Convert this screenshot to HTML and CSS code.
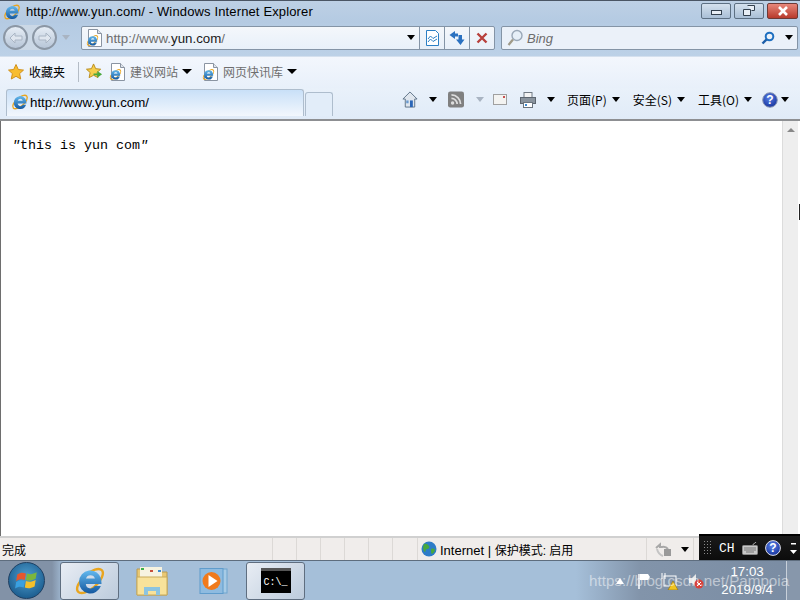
FILE: index.html
```html
<!DOCTYPE html>
<html>
<head>
    <title>http://www.yun.com/ - Windows Internet Explorer</title>
    <link rel="stylesheet" href="styles.css">
</head>
<body>
<svg class="defs">
    <defs>
        <linearGradient id="ieblue" x1="0" y1="0" x2="0" y2="1">
            <stop offset="0" stop-color="#62b8ee"/>
            <stop offset="1" stop-color="#14589f"/>
        </linearGradient>
        <radialGradient id="helpblue" cx=".45" cy=".35" r=".7">
            <stop offset="0" stop-color="#5a80e6"/>
            <stop offset="1" stop-color="#12309a"/>
        </radialGradient>
        <symbol id="ie" viewBox="0 0 20 20">
            <ellipse cx="10" cy="10" rx="10" ry="4.600" transform="rotate(-42 10 10)" fill="none" stroke="#e9a51e" stroke-width="1.500"/>
            <path d="M3.200 10.500a7 7 0 0 1 13.800-1.700l.2 3H7.400a3 3 0 0 0 5.600 1.300h3.800A7 7 0 0 1 3.200 10.500zm4.300-2h5.600a2.900 2.900 0 0 0-5.600 0z" fill="url(#ieblue)"/>
        </symbol>
        <symbol id="iedoc" viewBox="0 0 16 18">
            <path d="M2.500 .5h9l4 4v13h-13z" fill="#fff" stroke="#8a94a2"/>
            <path d="M11.500 .5v4h4" fill="#dfe5ec" stroke="#8a94a2"/>
            <use href="#ie" x="0" y="5" width="13" height="13"/>
        </symbol>
    </defs>
</svg>

<div class="window">
    <div class="titlebar">
        <svg class="ico16"><use href="#ie"/></svg>
        <span class="title">http://www.yun.com/ - Windows Internet Explorer</span>
        <div class="winbtns">
            <div class="winbtn"><span class="min-mark"></span></div>
            <div class="winbtn">
                <svg width="12" height="12" viewBox="0 0 12 12"><path d="M4.500 .5h7v5h-3M.5 4.500h7v6h-7z" fill="#e8eef5" stroke="#33404e"/></svg>
            </div>
            <div class="winbtn close">
                <svg width="14" height="10" viewBox="0 0 14 10"><path d="M3 1l8 8M11 1l-8 8" stroke="#fff" stroke-width="2.600"/></svg>
            </div>
        </div>
    </div>

    <div class="navbar">
        <div class="backfwd">
            <div class="round"><svg width="14" height="12" viewBox="0 0 14 12"><path d="M1 6l5-5v3h7v4H6v3z" fill="#dfe6ef" stroke="#a9b5c4"/></svg></div>
            <div class="round"><svg width="14" height="12" viewBox="0 0 14 12"><path d="M13 6L8 1v3H1v4h7v3z" fill="#dfe6ef" stroke="#a9b5c4"/></svg></div>
        </div>
        <span class="caret pale"></span>
        <div class="address">
            <svg class="ico-doc"><use href="#iedoc"/></svg>
            <span class="url">http://www.<b>yun.com</b>/</span>
            <span class="caret addr-caret"></span>
            <div class="addr-btn">
                <svg width="15" height="16" viewBox="0 0 15 16"><path d="M1.500 .5h9l3 3v12h-12z" fill="#fff" stroke="#2b7fc4"/><path d="M3 9l2.500-3 2.500 2.500L12 6M3 12l2.500-3 2.500 2.500 4-2.500" fill="none" stroke="#2b7fc4"/></svg>
            </div>
            <div class="addr-btn">
                <svg width="16" height="16" viewBox="0 0 16 16"><path d="M6 1L.5 5 6 9V6.500h3v-3H6z" fill="#2b71c0"/><path d="M11.500 15l4-5.500H13V5H9.500v4.500H7z" fill="#2b71c0"/></svg>
            </div>
            <div class="addr-btn">
                <svg width="12" height="12" viewBox="0 0 12 12"><path d="M1.500 1.500l9 9M10.500 1.500l-9 9" stroke="#b8403c" stroke-width="2.400"/></svg>
            </div>
        </div>
        <div class="search">
            <svg width="16" height="18" viewBox="0 0 16 18"><circle cx="10" cy="6.500" r="5" fill="#e6eff8" stroke="#9aa8b8" stroke-width="1.400"/><path d="M6 10.500L1.500 16" stroke="#a09a88" stroke-width="2.200"/></svg>
            <span class="bing">Bing</span>
            <svg class="go" width="14" height="14" viewBox="0 0 14 14"><circle cx="8.500" cy="5.500" r="3.800" fill="none" stroke="#1d6fc0" stroke-width="2"/><path d="M5.500 8.500L1.500 12.500" stroke="#1d5fa8" stroke-width="2.400"/></svg>
            <span class="caret search-caret"></span>
        </div>
    </div>

    <div class="favbar">
        <svg class="ico-star" viewBox="0 0 16 16"><path d="M8 .5l2.300 5 5.200.6-3.900 3.500 1.100 5.400L8 12.300 3.300 15l1.100-5.400L.5 6.100l5.200-.6z" fill="#f8bd30" stroke="#d0901c"/></svg>
        <span class="fav-label">收藏夹</span>
        <span class="sep"></span>
        <svg class="ico-addfav" viewBox="0 0 18 18"><path d="M8 1l2.200 5 5.300.6-3.900 3.500 1.100 5.400L8 13l-4.700 2.500 1.100-5.400L.5 6.600l5.300-.6z" fill="#f6cf4c" stroke="#b88a1a"/><path d="M8 11h4V8.500l5 3.500-5 3.500V13H8z" fill="#4aa83c"/></svg>
        <svg class="ico-doc"><use href="#iedoc"/></svg>
        <span class="fav-link">建议网站</span>
        <span class="caret"></span>
        <svg class="ico-doc second"><use href="#iedoc"/></svg>
        <span class="fav-link">网页快讯库</span>
        <span class="caret"></span>
    </div>

    <div class="tabbar">
        <div class="tab">
            <svg class="ico16"><use href="#ie"/></svg>
            <span>http://www.yun.com/</span>
        </div>
        <div class="newtab"></div>
        <div class="cmds">
            <svg class="cmd-ico" viewBox="0 0 16 18"><path d="M8 1L.5 8.500 3 8.500V17h10V8.500h2.500z" fill="#dfe6ee" stroke="#5d7286"/><rect x="8" y="10" width="3" height="7" fill="#2a66b8"/><rect x="4" y="10" width="2.500" height="3" fill="#6a9ad0"/></svg>
            <span class="caret m-home"></span>
            <svg class="cmd-ico" viewBox="0 0 14 14"><rect width="14" height="14" rx="2" fill="#808080"/><circle cx="4" cy="10" r="1.500" fill="#ddd"/><path d="M3 6a5 5 0 0 1 5 5M3 3a8 8 0 0 1 8 8" fill="none" stroke="#ddd" stroke-width="1.500"/></svg>
            <span class="caret pale m-rss"></span>
            <svg class="mail" width="14" height="11" viewBox="0 0 14 11"><rect x=".5" y=".5" width="13" height="10" fill="#f3f3f1" stroke="#a0a0a0"/><rect x="10" y="2" width="2" height="2" fill="#c95050"/></svg>
            <svg class="printer" width="16" height="16" viewBox="0 0 16 16"><rect x="4" y=".5" width="8" height="5" fill="#f4f4f4" stroke="#707a84"/><rect x=".5" y="5.500" width="15" height="6" fill="#8a949e" stroke="#5d6670"/><rect x="3.500" y="10.500" width="9" height="5" fill="#fff" stroke="#6b747d"/><rect x="5" y="12" width="2" height="2" fill="#3c8ad0"/></svg>
            <span class="caret m-print"></span>
            <span class="cmd">页面(P)</span><span class="caret"></span>
            <span class="cmd">安全(S)</span><span class="caret"></span>
            <span class="cmd">工具(O)</span><span class="caret"></span>
            <svg class="help" width="16" height="16" viewBox="0 0 16 16"><circle cx="8" cy="8" r="7.300" fill="url(#helpblue)" stroke="#8c98b4"/><text x="8" y="12" class="help-q">?</text></svg>
            <span class="caret m-help"></span>
        </div>
    </div>

    <div class="page">
        <pre class="content"><i>"</i>this is yun com<i>"</i></pre>
        <div class="scrollbar"><span class="scroll-up"></span></div>
        <span class="edge-mark"></span>
    </div>

    <div class="statusbar">
        <span class="st-done">完成</span>
        <span class="st-cell"></span>
        <span class="st-cell"></span>
        <span class="st-cell"></span>
        <span class="st-cell"></span>
        <span class="st-cell"></span>
        <span class="st-cell"></span>
        <span class="st-zone">
            <svg width="16" height="16" viewBox="0 0 16 16"><circle cx="8" cy="8" r="7.500" fill="#2d7cc8"/><path d="M3 3c3-1 4 1 5 2s0 3-2 3-1 3-2 3S1 7 3 3zM10 8c2-1 4 0 4 1s-2 4-3 4-1-4-1-5z" fill="#48a83e"/></svg>
            <span>Internet | <span class="zone-cjk">保护模式: 启用</span></span>
        </span>
        <span class="st-lock">
            <svg width="18" height="16" viewBox="0 0 18 16"><path d="M1 7l4-3.500v2.500h2a6 6 0 0 1 6 2" fill="none" stroke="#a8a8a8" stroke-width="2"/><path d="M2 8c1 4 3 6 6 7" fill="none" stroke="#c4c4c4" stroke-width="2"/><rect x="9" y="8" width="7" height="7" fill="#9a9a9a"/></svg>
            <span class="caret"></span>
        </span>
        <span class="st-rest"></span>
    </div>

    <div class="taskbar">
        <div class="orb">
            <svg width="26" height="26" viewBox="0 0 24 24"><path d="M3 6c3-2 5-2 8-1l-1 6c-3-1-5-1-8 1z" fill="#e4572e"/><path d="M12 5c3 1 5 1 9-1l-1 6c-4 2-6 2-9 1z" fill="#7cb63c"/><path d="M2 13c3-2 5-2 8-1l-1 6c-3-1-5-1-8 1z" fill="#3aa0e0"/><path d="M11 12c3 1 5 1 9-1l-1 6c-4 2-6 2-9 1z" fill="#f4c02c"/></svg>
        </div>
        <div class="task active"><svg class="task-ico" viewBox="0 0 20 20"><use href="#ie"/></svg></div>
        <div class="task">
            <svg width="32" height="30" viewBox="0 0 32 30"><path d="M1 3h12l2 3h16v23H1z" fill="#e9c874" stroke="#b89a50"/><rect x="4" y="1" width="22" height="10" fill="#f7f3e0"/><rect x="5" y="2" width="3" height="2" fill="#3eb04a"/><rect x="14" y="4" width="3" height="2" fill="#c8503c"/><rect x="22" y="4" width="3" height="2" fill="#3c8ad0"/><path d="M1 11h30v18H1z" fill="#f8e29a" stroke="#c8aa5a"/><path d="M8 29v-8h16v8h-4v-4h-8v4z" fill="#8cc4e0"/></svg>
        </div>
        <div class="task">
            <svg width="29" height="26" viewBox="0 0 29 26"><rect x="6" y="1" width="22" height="24" fill="#a7cbe6" stroke="#6fa5cf"/><rect x="1" y=".5" width="23" height="25" fill="#8ebbe0" stroke="#5f9ccc"/><circle cx="12.500" cy="13" r="9" fill="#f07a1c"/><path d="M9.500 7l9 6-9 6z" fill="#fff"/></svg>
        </div>
        <div class="task active">
            <div class="cmdicon"><span>C:\_</span></div>
        </div>
        <div class="tray">
            <svg class="tray-up" width="8" height="6" viewBox="0 0 8 6"><path d="M4 0l4 6H0z" fill="#fff"/></svg>
            <svg class="tray-flag" width="14" height="16" viewBox="0 0 14 16"><path d="M2 1v15" stroke="#fff" stroke-width="1.500"/><path d="M3 1h8l2 3-2 3H3z" fill="#fff"/></svg>
            <svg class="tray-net" width="18" height="18" viewBox="0 0 18 18"><rect x="3" y="4" width="12" height="10" fill="none" stroke="#fff"/><path d="M1 1v6M4 1v6" stroke="#fff"/><path d="M12 9l5 9H7z" fill="#f0c420" stroke="#8a6c10" stroke-width=".6"/></svg>
            <svg class="tray-vol" width="16" height="18" viewBox="0 0 16 18"><path d="M1 6h3l4-4v13l-4-4H1z" fill="#e8e8e8"/><circle cx="11" cy="12" r="4.500" fill="#d8413a"/><path d="M9 10l4 4M13 10l-4 4" stroke="#fff"/></svg>
            <div class="clock"><span>17:03</span><span>2019/9/4</span></div>
        </div>
        <div class="showdesk"></div>
    </div>
</div>

<div class="langbar">
    <span class="grip"></span>
    <span class="lang">CH</span>
    <svg width="16" height="14" viewBox="0 0 16 14"><path d="M11 4c0-2 2-1 3-3" fill="none" stroke="#aaa"/><rect x=".5" y="4.500" width="15" height="9" rx="1" fill="#c8c8c8" stroke="#8a8a8a"/><path d="M2 7h12M2 9h12M4 11h8" stroke="#777"/></svg>
    <svg width="16" height="16" viewBox="0 0 16 16"><circle cx="8" cy="8" r="7.400" fill="url(#helpblue)" stroke="#e0e0e8"/><text x="8" y="12" class="help-q">?</text></svg>
    <svg class="lang-arrows" width="7" height="12" viewBox="0 0 7 12"><path d="M1 1h5v1.500H1zM0 8h7l-3.500 4z" fill="#fff"/></svg>
</div>

<div class="watermark">https://blog.csdn.net/Pampoia</div>
</body>
</html>
```

FILE: styles.css
```css
* {
    box-sizing: border-box;
}

html, body {
    margin: 0;
    height: 100%;
    overflow: hidden;
}

body {
    position: relative;
    font-family: "Noto Sans CJK SC", "Liberation Sans", sans-serif;
    font-size: 12px;
    color: #000;
}

.defs {
    position: absolute;
    width: 0;
    height: 0;
}

.window {
    display: flex;
    flex-direction: column;
    width: 800px;
    height: 600px;
}

/* small black arrow used all over the toolbars */
.caret {
    display: inline-block;
    width: 0;
    height: 0;
    flex: none;
    border-left: 5px solid transparent;
    border-right: 5px solid transparent;
    border-top: 5px solid #000;
}

.caret.pale {
    border-top-color: #a9b4c2;
}

.ico16 {
    width: 18px;
    height: 18px;
    flex: none;
}

.ico-doc {
    width: 16px;
    height: 18px;
    flex: none;
}

/* title bar */
.titlebar {
    display: flex;
    align-items: center;
    height: 23px;
    padding: 0 0 1px 3px;
    border-top: 1px solid #4a5564;
    background: linear-gradient(#bdd0e5, #b4cae2);
}

.title {
    margin-left: 5px;
    font-family: "Liberation Sans", sans-serif;
    font-size: 13px;
    letter-spacing: .14px;
}

.winbtns {
    display: flex;
    gap: 3px;
    margin-left: auto;
    margin-right: 2px;
    align-self: flex-start;
    margin-top: 2px;
}

.winbtn {
    display: flex;
    align-items: center;
    justify-content: center;
    width: 30px;
    height: 16px;
    border: 1px solid #5d7083;
    border-radius: 2px;
    background: linear-gradient(#d5e1ee, #a9bfd6);
}

.winbtn.close {
    width: 31px;
    background: linear-gradient(#e8877a, #b83a2c);
    border-color: #6e3a36;
}

.min-mark {
    width: 11px;
    height: 5px;
    border: 1px solid #33404e;
    background: #e8eef5;
    margin-top: 2px;
}

/* address row */
.navbar {
    display: flex;
    align-items: center;
    height: 33px;
    padding: 0 2px 4px 3px;
    background: linear-gradient(#b5cbe3, #bcd1e7);
}

.backfwd {
    display: flex;
    gap: 4px;
    border-radius: 13px;
    background: #cbd8e6;
}

.round {
    display: flex;
    align-items: center;
    justify-content: center;
    width: 25px;
    height: 25px;
    border: 2px solid #8b97a5;
    border-radius: 50%;
    background: linear-gradient(#e6edf5, #b7c6d8);
}

.navbar > .caret {
    margin: 0 11px 0 5px;
    border-left-width: 4px;
    border-right-width: 4px;
}

.address {
    display: flex;
    align-items: center;
    width: 414px;
    height: 24px;
    padding-left: 4px;
    border: 1px solid #8494a6;
    border-radius: 2px;
    background: linear-gradient(#f4f7fb, #e8f0f9);
}

.url {
    margin-left: 4px;
    padding-top: 1px;
    font-family: "Liberation Sans", sans-serif;
    font-size: 13.300px;
    color: #6d6d6d;
}

.url b {
    font-weight: normal;
    color: #1a1a1a;
}

.addr-caret {
    margin-left: auto;
    margin-right: 4px;
    border-left-width: 4px;
    border-right-width: 4px;
}

.addr-btn {
    display: flex;
    align-items: center;
    justify-content: center;
    width: 25px;
    height: 100%;
    border-left: 1px solid #8494a6;
}

.search {
    display: flex;
    align-items: center;
    flex: 1;
    height: 24px;
    margin-left: 6px;
    padding: 0 4px 0 5px;
    border: 1px solid #8494a6;
    border-radius: 2px;
    background: #ebf1f9;
}

.bing {
    margin-left: 4px;
    padding-top: 1px;
    font-family: "Liberation Sans", sans-serif;
    font-size: 13px;
    font-style: italic;
    color: #6d6d6d;
}

.go {
    margin-left: auto;
}

.search-caret {
    margin-left: 10px;
    border-left-width: 4px;
    border-right-width: 4px;
}

/* favorites row */
.favbar {
    display: flex;
    align-items: center;
    height: 32px;
    padding-left: 8px;
    padding-bottom: 2px;
    background: linear-gradient(#f3f7fd, #e8f0fa);
    border-top: 1px solid #d4e0ee;
}

.ico-star {
    width: 16px;
    height: 16px;
}

.fav-label {
    margin-left: 5px;
}

.sep {
    width: 1px;
    height: 20px;
    margin: 0 7px 0 13px;
    background: #b4bcc6;
}

.ico-addfav {
    width: 17px;
    height: 17px;
    margin-right: 6px;
}

.fav-link {
    margin: 0 4px 0 5px;
    color: #6e6e6e;
}

.ico-doc.second {
    margin-left: 10px;
}

/* tabs and command bar */
.tabbar {
    display: flex;
    align-items: flex-end;
    height: 33px;
    padding-left: 6px;
    background: linear-gradient(#e9f1fa, #e0ebf8);
    border-bottom: 2px solid #8d8f92;
}

.tab {
    display: flex;
    align-items: center;
    gap: 1px;
    width: 298px;
    height: 27px;
    margin-bottom: 3px;
    padding: 0 0 2px 4px;
    border: 1px solid #aebdcd;
    border-bottom: none;
    border-radius: 3px 3px 0 0;
    background: linear-gradient(#c9e0f8, #f2f7fd);
    font-family: "Liberation Sans", sans-serif;
    font-size: 13.300px;
}

.newtab {
    width: 28px;
    height: 24px;
    margin-left: 1px;
    margin-bottom: 3px;
    border: 1px solid #aebdcd;
    border-bottom: none;
    border-radius: 3px 3px 0 0;
    background: #e2edf9;
}

.cmds {
    display: flex;
    align-items: center;
    align-self: center;
    margin-left: 69px;
    margin-top: -8px;
}

.cmds .caret {
    border-left-width: 4px;
    border-right-width: 4px;
}

.cmd-ico {
    width: 16px;
    height: 17px;
}

.m-home {
    margin: 0 11px 0 11px;
}

.m-rss {
    margin: 0 9px 0 12px;
}

.mail {
    margin-right: 13px;
}

.m-print {
    margin: 0 12px 0 11px;
}

.cmd {
    margin-right: 5px;
}

.cmd + .caret {
    margin-right: 13px;
}

.help {
    margin-left: -3px;
}

.help-q {
    font-family: "Liberation Sans", sans-serif;
    font-size: 12px;
    font-weight: bold;
    fill: #fff;
    text-anchor: middle;
}

.m-help {
    margin-left: 3px;
}

/* page area */
.page {
    position: relative;
    display: flex;
    flex: 1;
    border-left: 1px solid #6e6e6e;
    background: #fff;
}

.content {
    flex: 1;
    margin: 17px 0 0 11px;
    font-family: "Liberation Mono", monospace;
    font-size: 13.330px;
}

.scrollbar {
    display: flex;
    justify-content: center;
    width: 16px;
    margin-right: 2px;
    padding-top: 7px;
    background: #eee;
    border-left: 1px solid #dcdcdc;
}

.scroll-up {
    width: 0;
    height: 0;
    border-left: 4px solid transparent;
    border-right: 4px solid transparent;
    border-bottom: 4px solid #888;
}

.edge-mark {
    position: absolute;
    right: 0;
    top: 83px;
    width: 1px;
    height: 16px;
    background: #222;
}

/* status bar */
.statusbar {
    display: flex;
    align-items: center;
    height: 24px;
    border-top: 2px solid #d0d0d0;
    background: #f0edeb;
}

.st-done {
    width: 272px;
    padding-left: 2px;
}

.st-cell {
    width: 24px;
    height: 100%;
    border-left: 1px solid #dcd9d6;
}

.st-cell:nth-child(7) {
    width: 25px;
}

.st-zone {
    display: flex;
    align-items: center;
    gap: 3px;
    width: 229px;
    height: 100%;
    padding-left: 3px;
    border-left: 1px solid #dcd9d6;
    font-family: "Liberation Sans", "Noto Sans CJK SC", sans-serif;
    font-size: 13px;
}

.zone-cjk {
    font-size: 12px;
}

.st-lock {
    display: flex;
    align-items: center;
    gap: 8px;
    width: 47px;
    height: 100%;
    padding-left: 8px;
    border-left: 1px solid #dcd9d6;
}

.st-lock .caret {
    border-left-width: 4px;
    border-right-width: 4px;
}

.st-rest {
    flex: 1;
    height: 100%;
    border-left: 1px solid #dcd9d6;
}

/* taskbar */
.taskbar {
    display: flex;
    align-items: center;
    height: 40px;
    background: linear-gradient(90deg, #8292a7 52px, #a5bfd9 64px, #a5bfd9 72%, #8294aa 80%, #7a8ca3);
    border-top: 1px solid #5e6d7e;
}

.orb {
    display: flex;
    align-items: center;
    justify-content: center;
    width: 37px;
    height: 37px;
    margin: 0 15px 0 8px;
    border-radius: 50%;
    border: 1px solid #1e3f62;
    background: radial-gradient(circle at 50% 40%, #4f9fd0, #0d4a7c);
}

.task {
    display: flex;
    align-items: center;
    justify-content: center;
    width: 59px;
    height: 38px;
    margin-right: 3px;
}

.task.active {
    border: 1px solid #5f6e80;
    border-radius: 3px;
    background: linear-gradient(135deg, #e8edf4, #bccbdc);
}

.task-ico {
    width: 32px;
    height: 32px;
}

.cmdicon {
    display: flex;
    align-items: center;
    width: 30px;
    height: 25px;
    border-top: 3px solid #555;
    background: #000;
    color: #fff;
    font-family: "Liberation Mono", monospace;
    font-size: 10px;
    padding-left: 3px;
}

.tray {
    display: flex;
    align-items: center;
    margin-left: auto;
    padding-right: 13px;
}

.tray-up {
    margin-right: 13px;
}

.tray-flag {
    margin-right: 10px;
}

.tray-net {
    margin-right: 9px;
}

.tray-vol {
    margin-right: 17px;
}

.clock {
    display: flex;
    flex-direction: column;
    align-items: center;
    color: #fff;
    font-family: "Liberation Sans", sans-serif;
    font-size: 13.300px;
    line-height: 18px;
}

.showdesk {
    width: 14px;
    height: 100%;
    background: #8797ab;
    border-left: 1px solid #c8d0da;
}

/* floating language bar */
.langbar {
    position: absolute;
    right: 0;
    top: 534px;
    display: flex;
    align-items: center;
    width: 101px;
    height: 26px;
    background: linear-gradient(#1a1a1a, #0c0c0c);
    border-top: 2px solid #000;
    color: #fff;
}

.grip {
    width: 9px;
    height: 16px;
    margin: 0 7px 0 4px;
    background: radial-gradient(#8a8a8a 40%, transparent 45%) 0 0 / 3px 3px;
}

.lang {
    font-family: "Liberation Mono", monospace;
    font-size: 13px;
    margin-right: 7px;
}

.langbar svg + svg {
    margin-left: 7px;
}

.langbar svg.lang-arrows {
    margin-left: 9px;
}

.watermark {
    position: absolute;
    left: 589px;
    top: 572px;
    font-family: "Liberation Sans", sans-serif;
    font-size: 15.200px;
    color: rgba(255, 255, 255, .5);
}
```
